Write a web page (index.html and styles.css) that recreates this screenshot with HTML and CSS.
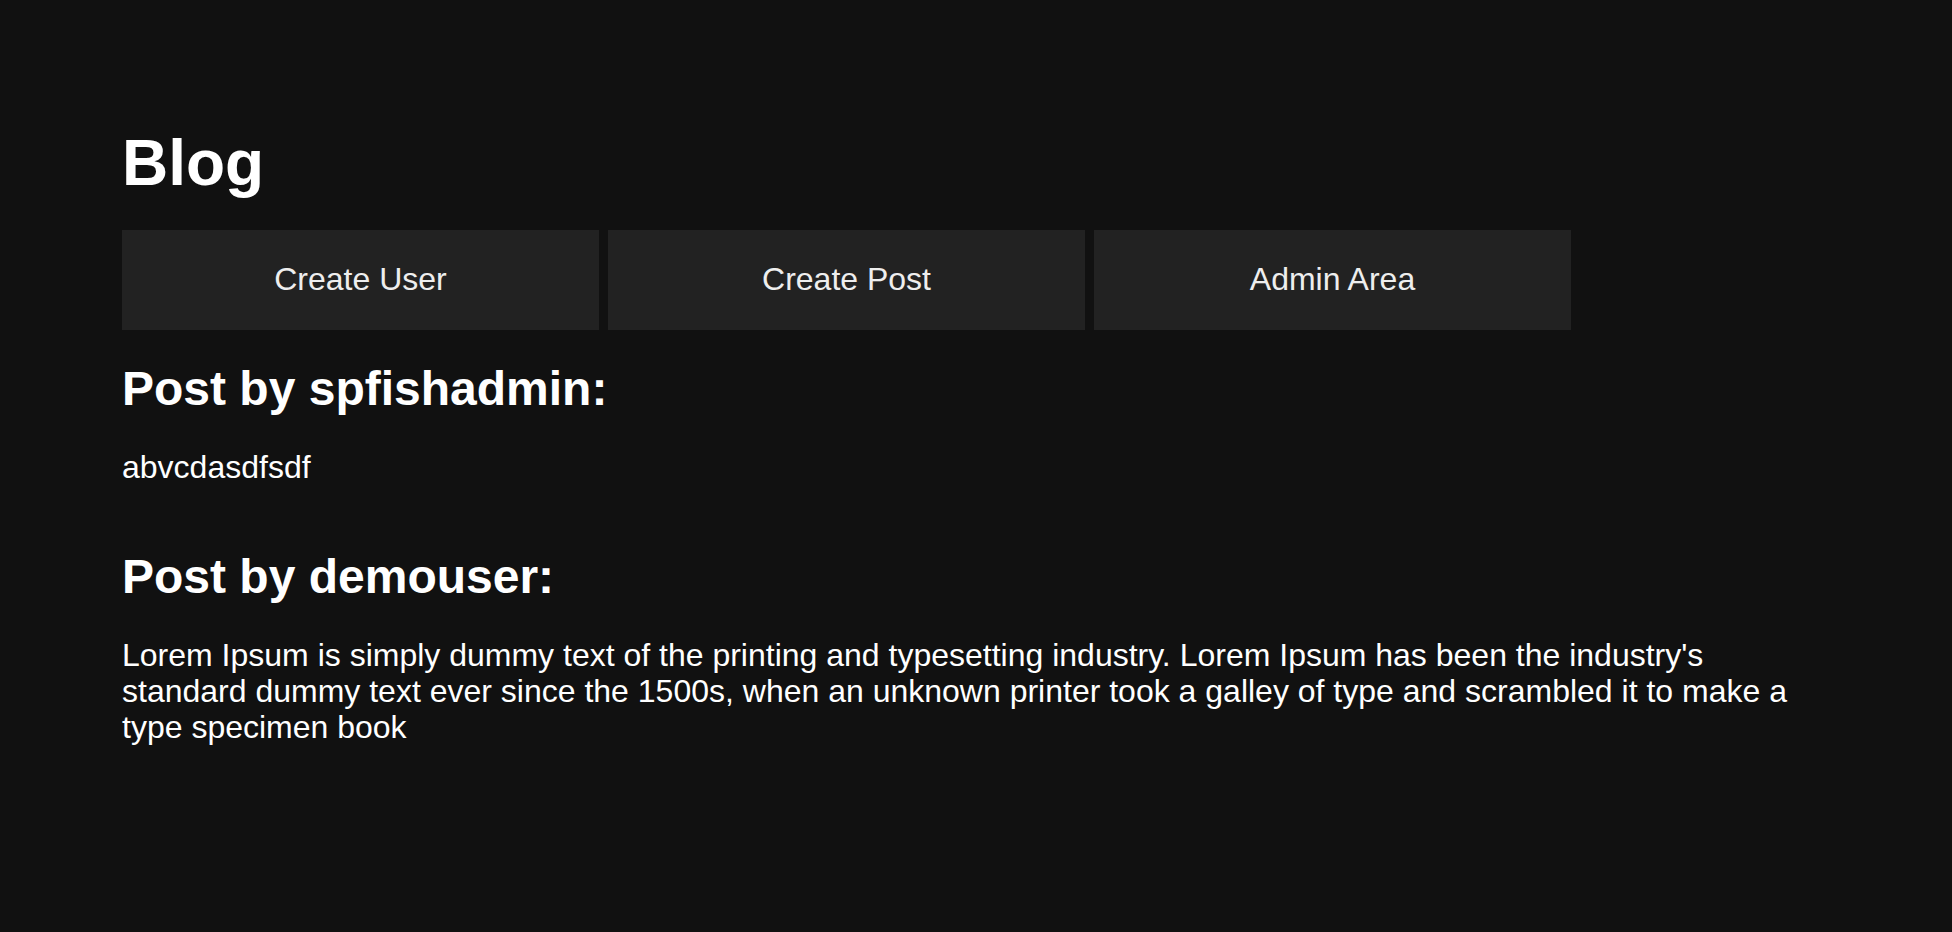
FILE: index.html
```html
<!DOCTYPE html>
<html lang="en">
<head>
<meta charset="utf-8">
<title>Blog</title>
<link rel="stylesheet" href="styles.css">
</head>
<body>
<main class="page">
  <h1 class="title">Blog</h1>
  <nav class="nav">
    <a class="nav-btn" href="#">Create User</a>
    <a class="nav-btn" href="#">Create Post</a>
    <a class="nav-btn" href="#">Admin Area</a>
  </nav>
  <section class="post">
    <h2 class="post-title">Post by spfishadmin:</h2>
    <p class="post-body">abvcdasdfsdf</p>
  </section>
  <section class="post">
    <h2 class="post-title">Post by demouser:</h2>
    <p class="post-body post-body-long">Lorem Ipsum is simply dummy text of the printing and typesetting industry. Lorem Ipsum has been the industry's standard dummy text ever since the 1500s, when an unknown printer took a galley of type and scrambled it to make a type specimen book</p>
  </section>
</main>
</body>
</html>
```

FILE: styles.css
```css
html, body {
  margin: 0;
  background: #111111;
}

.page {
  padding: 125px 122px 0;
  font-family: "Liberation Sans", Arial, Helvetica, sans-serif;
  color: #ffffff;
}

.title {
  margin: 0;
  font-size: 64px;
  line-height: 76px;
  font-weight: bold;
}

.nav {
  display: flex;
  gap: 9px;
  margin-top: 29px;
}

.nav-btn {
  width: 477px;
  height: 100px;
  box-sizing: border-box;
  padding-bottom: 2px;
  display: flex;
  align-items: center;
  justify-content: center;
  background: #222222;
  color: #eeeeee;
  font-size: 32px;
  line-height: 37px;
  text-decoration: none;
}

.post {
  margin-top: 31px;
}

.post + .post {
  margin-top: 63px;
}

.post-title {
  margin: 0;
  font-size: 48px;
  line-height: 55px;
  font-weight: bold;
}

.post-body {
  margin: 33px 0 0;
  font-size: 32px;
  line-height: 37px;
}

.post-body-long {
  margin-top: 33px;
  line-height: 36px;
}
```
